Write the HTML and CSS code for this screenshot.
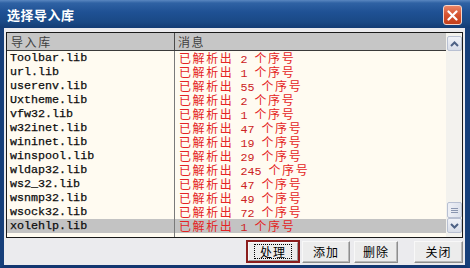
FILE: index.html
```html
<!DOCTYPE html>
<html lang="zh-CN">
<head>
    <meta charset="UTF-8">
    <title>选择导入库</title>
    <link rel="stylesheet" href="styles.css">
</head>
<body>

    <div class="window">
        <!-- Title bar -->
        <div class="titlebar">
            <span class="title">选择导入库</span>
            <div class="close-btn">
                <svg width="11" height="11" viewBox="0 0 11 11">
                    <path d="M1.5 1.5 L9.5 9.5 M9.5 1.5 L1.5 9.5" stroke="#fff" stroke-width="2.2" stroke-linecap="round"/>
                </svg>
            </div>
        </div>

        <div class="frame">
            <!-- Import list -->
            <div class="list">
                <div class="list-main">
                    <div class="list-head">
                        <div class="col-name"><span class="cn">导入库</span></div>
                        <div class="col-msg"><span class="cn">消息</span></div>
                    </div>
                    <div class="list-rows">
                        <div class="row"><div class="col-name">Toolbar.lib</div><div class="col-msg"><span class="cn">已解析出</span> 2 <span class="cn">个序号</span></div></div>
                        <div class="row"><div class="col-name">url.lib</div><div class="col-msg"><span class="cn">已解析出</span> 1 <span class="cn">个序号</span></div></div>
                        <div class="row"><div class="col-name">userenv.lib</div><div class="col-msg"><span class="cn">已解析出</span> 55 <span class="cn">个序号</span></div></div>
                        <div class="row"><div class="col-name">Uxtheme.lib</div><div class="col-msg"><span class="cn">已解析出</span> 2 <span class="cn">个序号</span></div></div>
                        <div class="row"><div class="col-name">vfw32.lib</div><div class="col-msg"><span class="cn">已解析出</span> 1 <span class="cn">个序号</span></div></div>
                        <div class="row"><div class="col-name">w32inet.lib</div><div class="col-msg"><span class="cn">已解析出</span> 47 <span class="cn">个序号</span></div></div>
                        <div class="row"><div class="col-name">wininet.lib</div><div class="col-msg"><span class="cn">已解析出</span> 19 <span class="cn">个序号</span></div></div>
                        <div class="row"><div class="col-name">winspool.lib</div><div class="col-msg"><span class="cn">已解析出</span> 29 <span class="cn">个序号</span></div></div>
                        <div class="row"><div class="col-name">wldap32.lib</div><div class="col-msg"><span class="cn">已解析出</span> 245 <span class="cn">个序号</span></div></div>
                        <div class="row"><div class="col-name">ws2_32.lib</div><div class="col-msg"><span class="cn">已解析出</span> 47 <span class="cn">个序号</span></div></div>
                        <div class="row"><div class="col-name">wsnmp32.lib</div><div class="col-msg"><span class="cn">已解析出</span> 49 <span class="cn">个序号</span></div></div>
                        <div class="row"><div class="col-name">wsock32.lib</div><div class="col-msg"><span class="cn">已解析出</span> 72 <span class="cn">个序号</span></div></div>
                        <div class="row selected"><div class="col-name">xolehlp.lib</div><div class="col-msg"><span class="cn">已解析出</span> 1 <span class="cn">个序号</span></div></div>
                    </div>
                </div>

                <!-- Scrollbar -->
                <div class="scrollbar">
                    <div class="sb-btn">
                        <svg width="9" height="6" viewBox="0 0 9 6"><path d="M1 5 L4.5 1.5 L8 5" fill="none" stroke="#4d6185" stroke-width="2"/></svg>
                    </div>
                    <div class="sb-track">
                        <div class="sb-thumb"><span></span><span></span><span></span></div>
                    </div>
                    <div class="sb-btn">
                        <svg width="9" height="6" viewBox="0 0 9 6"><path d="M1 1 L4.5 4.5 L8 1" fill="none" stroke="#4d6185" stroke-width="2"/></svg>
                    </div>
                </div>
            </div>

            <!-- Buttons -->
            <div class="actions">
                <div class="btn-focus"><div class="btn"><span class="focus-rect">处理</span></div></div>
                <div class="btn btn-add">添加</div>
                <div class="btn btn-del">删除</div>
                <div class="btn btn-close">关闭</div>
            </div>
        </div>
    </div>

</body>
</html>
```

FILE: styles.css
```css
* {
    box-sizing: border-box;
}
html, body {
    margin: 0;
    padding: 0;
}
body {
    width: 470px;
    height: 268px;
    overflow: hidden;
    font-family: "Noto Sans CJK SC", sans-serif;
}
.window {
    width: 470px;
    height: 268px;
    display: flex;
    flex-direction: column;
}

/* Title bar */
.titlebar {
    height: 28px;
    display: flex;
    align-items: center;
    justify-content: space-between;
    padding: 0 8px 0 7px;
    background: linear-gradient(to bottom, #5a87c0 0px, #2f62a4 3px, #1f5194 12px, #1a4985 22px, #133c74 28px);
}
.title {
    color: #fff;
    font-size: 13px;
    font-weight: bold;
    letter-spacing: 0.5px;
    margin-top: 1px;
}
.close-btn {
    width: 19px;
    height: 20px;
    margin-top: 2px;
    border: 1px solid #f3d6cc;
    border-radius: 3px;
    background: linear-gradient(to bottom, #ea8466, #d5532f 50%, #c23f1c);
    display: flex;
    align-items: center;
    justify-content: center;
}

/* Frame */
.frame {
    flex: 1;
    display: flex;
    flex-direction: column;
    background: #ebebee;
    border-left: 4px solid #163f7a;
    border-right: 5px solid #163f7a;
    border-bottom: 3px solid #123670;
    padding: 4px 2px 2px 2px;
}

/* List */
.list {
    flex: 1;
    display: flex;
    border: 1px solid #1a1a1a;
    background: #fffbf1;
}
.list-main {
    flex: 1;
    display: flex;
    flex-direction: column;
}
.list-head {
    height: 18px;
    display: grid;
    grid-template-columns: 168px 1fr;
    background: #c6c6c6;
    border-bottom: 1px solid #3a3a3a;
    color: #3f3f3f;
    font-size: 12px;
    line-height: 17px;
}
.list-head .col-name {
    padding-left: 4px;
    border-right: 1px solid #4a4a4a;
}
.list-head .col-msg {
    padding-left: 3px;
}
.list-rows {
    flex: 1;
    background: linear-gradient(to right, transparent 167px, #7a7a7a 167px, #7a7a7a 168px, transparent 168px);
}
.row {
    height: 14px;
    display: grid;
    grid-template-columns: 168px 1fr;
    line-height: 14px;
    font-family: "Liberation Mono", monospace;
    font-size: 11.7px;
    white-space: nowrap;
}
.row .col-name {
    padding-left: 3px;
    color: #0c0c0c;
    border-right: 1px solid #7a7a7a;
    -webkit-text-stroke: 0.25px #0c0c0c;
}
.row .col-msg {
    padding-left: 4px;
    color: #cc2222;
}
.row.selected {
    background: #c3c3c3;
}
.cn {
    font-family: "Noto Sans CJK SC", sans-serif;
    font-size: 12px;
    letter-spacing: 1.6px;
}
.row .col-msg .cn {
    color: #e42424;
}

/* Scrollbar */
.scrollbar {
    width: 16px;
    display: flex;
    flex-direction: column;
    background: #f3f2ee;
    padding: 3px 0 4px 1px;
}
.sb-btn {
    height: 15px;
    border: 1px solid #b8c0d2;
    border-radius: 2px;
    background: linear-gradient(to bottom, #f0f2f8, #d8dde8);
    display: flex;
    align-items: center;
    justify-content: center;
}
.sb-track {
    flex: 1;
    display: flex;
    flex-direction: column;
    justify-content: flex-end;
}
.sb-thumb {
    height: 16px;
    border: 1px solid #b8c0d2;
    border-radius: 2px;
    background: linear-gradient(to right, #eef0f6, #dde2ec);
    display: flex;
    flex-direction: column;
    align-items: center;
    justify-content: center;
    gap: 1px;
}
.sb-thumb span {
    width: 7px;
    height: 1px;
    background: #8a96b0;
}

/* Buttons */
.actions {
    height: 23px;
    margin-top: 2px;
    display: flex;
    justify-content: flex-end;
    align-items: center;
}
.btn {
    height: 22px;
    display: flex;
    align-items: center;
    justify-content: center;
    font-size: 12px;
    letter-spacing: 1px;
    color: #000;
    background: #ececec;
    border: 1px solid #8e8e8e;
    border-top-color: #f8f8f8;
    border-left-color: #f8f8f8;
    box-shadow: inset -1px -1px 0 #b8b8b8;
}
.btn-focus {
    width: 54px;
    height: 23px;
    border: 2px solid #8a1d1d;
    display: flex;
}
.btn-focus .btn {
    flex: 1;
    height: auto;
    border: 1px solid #f8f8f8;
    border-right-color: #9a9a9a;
    border-bottom-color: #9a9a9a;
    box-shadow: none;
}
.focus-rect {
    border: 1px dotted #000;
    padding: 0 5px;
    line-height: 13px;
}
.btn-add {
    width: 48px;
    margin-left: 2px;
}
.btn-del {
    width: 44px;
    margin-left: 4px;
}
.btn-close {
    width: 49px;
    margin-left: 16px;
}
```
